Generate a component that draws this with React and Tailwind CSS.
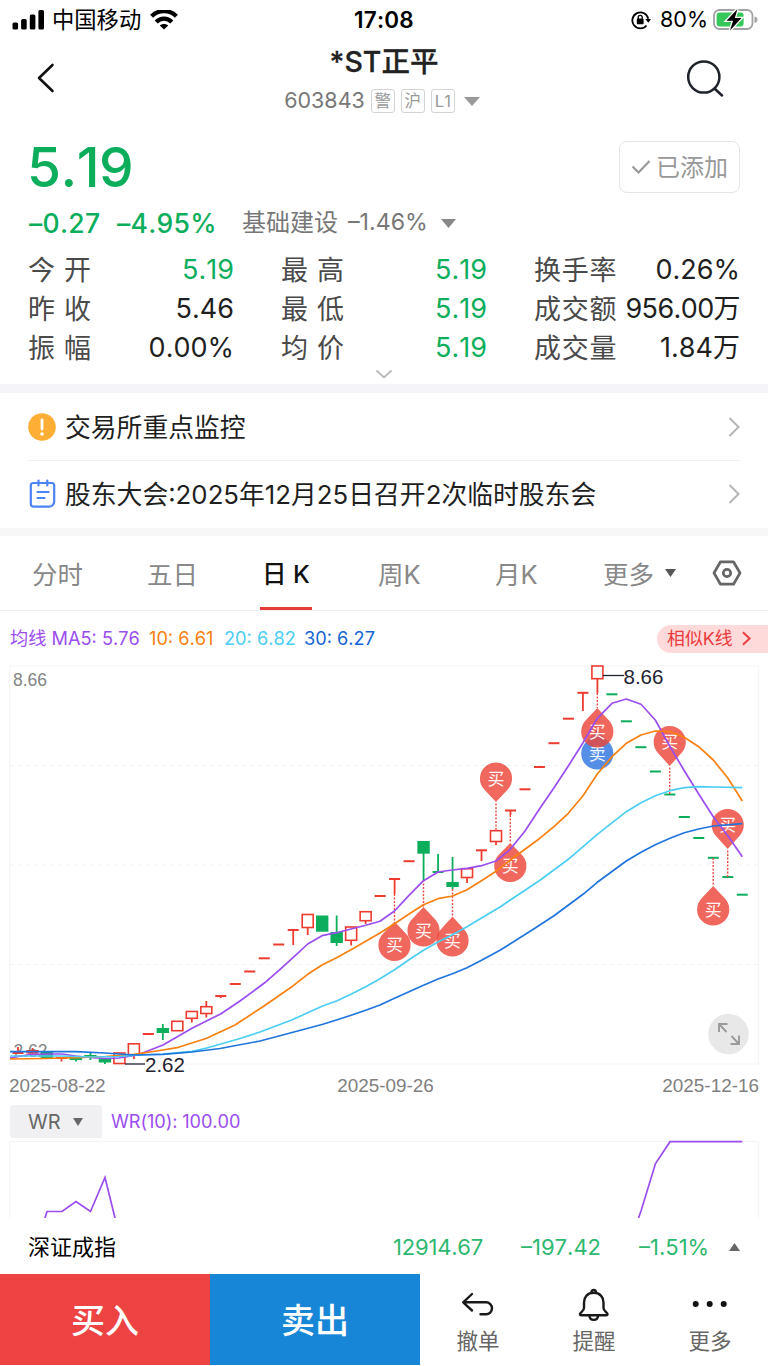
import React from 'react'

const RED = '#ee3b30'
const GREEN = '#0cae5c'

// k: 'dash' | 'up' (hollow) | 'down' (filled) | 'bar' (filled red); y values are pixels on the canvas
const CANDLES = [
  { k: 'dash', c: RED, top: 1053, wick: [1047, 1054] },
  { k: 'bar', c: RED, top: 1050, bottom: 1053.5, wick: [1048, 1055] },
  { k: 'down', c: GREEN, top: 1051, bottom: 1058 },
  { k: 'dash', c: RED, top: 1058, wick: [1058, 1061.5] },
  { k: 'down', c: GREEN, top: 1057, bottom: 1060, wick: [1057, 1061.5] },
  { k: 'down', c: GREEN, top: 1055, bottom: 1058, wick: [1052.5, 1060] },
  { k: 'down', c: GREEN, top: 1059, bottom: 1062.5, wick: [1058, 1064] },
  { k: 'up', c: RED, top: 1053, bottom: 1063.5 },
  { k: 'up', c: RED, top: 1043.8, bottom: 1055, wick: [1055, 1059] },
  { k: 'dash', c: RED, top: 1034 },
  { k: 'down', c: GREEN, top: 1028, bottom: 1033, wick: [1024, 1040] },
  { k: 'up', c: RED, top: 1021.3, bottom: 1030.7 },
  { k: 'up', c: RED, top: 1011.5, bottom: 1018.3, wick: [1018, 1022.5] },
  { k: 'up', c: RED, top: 1006.7, bottom: 1013.5, wick: [1001, 1017.5] },
  { k: 'dash', c: RED, top: 996, wick: [996, 998] },
  { k: 'dash', c: RED, top: 984 },
  { k: 'dash', c: RED, top: 971.5 },
  { k: 'dash', c: RED, top: 958.3 },
  { k: 'dash', c: RED, top: 944.5 },
  { k: 'dash', c: RED, top: 930, wick: [930, 945] },
  { k: 'up', c: RED, top: 914.5, bottom: 927.5, wick: [927, 935] },
  { k: 'down', c: GREEN, top: 915.5, bottom: 931.7 },
  { k: 'down', c: GREEN, top: 932, bottom: 943, wick: [915.5, 946] },
  { k: 'up', c: RED, top: 927, bottom: 940.3, wick: [940, 945.5] },
  { k: 'up', c: RED, top: 911.7, bottom: 920.7, wick: [920, 924] },
  { k: 'dash', c: RED, top: 896 },
  { k: 'dash', c: RED, top: 879, wick: [879, 894] },
  { k: 'dash', c: RED, top: 861.2 },
  { k: 'down', c: GREEN, top: 841, bottom: 853.7, wick: [850, 880] },
  { k: 'dash', c: GREEN, top: 872, wick: [854, 872] },
  { k: 'down', c: GREEN, top: 882, bottom: 887, wick: [857, 889] },
  { k: 'up', c: RED, top: 868.7, bottom: 877.5, wick: [877, 883] },
  { k: 'dash', c: RED, top: 850.3, wick: [850, 861] },
  { k: 'up', c: RED, top: 830.7, bottom: 841.5, wick: [841, 845] },
  { k: 'dash', c: RED, top: 810.5, wick: [810, 815] },
  { k: 'dash', c: RED, top: 789.3 },
  { k: 'dash', c: RED, top: 767 },
  { k: 'dash', c: RED, top: 743.2 },
  { k: 'dash', c: RED, top: 718.7 },
  { k: 'dash', c: RED, top: 692.8, wick: [692, 711] },
  { k: 'up', c: RED, top: 666, bottom: 678.7, wick: [678, 693] },
  { k: 'dash', c: GREEN, top: 694.3 },
  { k: 'dash', c: GREEN, top: 721.3 },
  { k: 'dash', c: GREEN, top: 747.2 },
  { k: 'dash', c: GREEN, top: 771.5 },
  { k: 'dash', c: GREEN, top: 794.5 },
  { k: 'dash', c: GREEN, top: 817 },
  { k: 'dash', c: GREEN, top: 838 },
  { k: 'dash', c: GREEN, top: 857.8 },
  { k: 'dash', c: GREEN, top: 877 },
  { k: 'dash', c: GREEN, top: 894.7 },
]

const MA_LINES = [
  {
    color: '#9b4df0',
    points:
      '10,1058 30,1054.5 47,1054 62,1054 76,1056 90,1057.5 105,1058.5 119,1058 134,1055.5 140,1054 163,1045 192,1028.3 221,1013.7 240,1001 264,983.3 278.7,970.7 293.3,957.3 307.7,944 322,935.7 336.5,932.7 351,929 365.7,925.3 380,921.3 394.5,911 409,895.3 423.5,880.7 438,872 452.5,870 467,868.3 481.5,865.7 496,861 510.3,849.3 525,831 539.3,809.3 554,787.7 568.3,766 583,742.7 597.3,718.3 612,703.3 626.3,699 641,704.3 655.3,720 670,746.7 684.3,770.7 698.7,794 713.3,816.7 728,836 742.3,856.7',
  },
  {
    color: '#f98010',
    points:
      '10,1059 45,1058.5 76,1057.7 105,1056.5 134,1054.3 160,1050.5 177,1047.7 206.7,1038.3 235,1025 264,1006 293.3,985.7 307.7,974.3 322,965 336.5,957.7 351,949.7 365.7,941.3 380,933 394.5,923.7 409,914 423.5,904.7 438,898.7 452.5,896 467,889.7 481.5,880.7 496,871.3 510.3,860 525,849.3 539.3,838.7 554,826.7 568.3,813.3 583,795.7 597.3,774 612,756.7 626.3,743.3 641,735 655.3,731 670,731.7 684.3,737.3 698.7,746.7 713.3,760 728,778.3 742.3,801',
  },
  {
    color: '#4ccdf5',
    points:
      '10,1056 62,1056 90,1057 119,1056.5 140,1055 163,1054 192,1051.3 206.7,1048 220,1044.3 240,1038.5 260,1032 291.7,1020 307.7,1012.7 322,1006.3 336.5,1001 351,994.3 365.7,986.7 380,978.7 394.5,969.7 409,959.7 423.5,950.3 438,942 452.5,934.7 467,926.7 481.5,918 500,907 510.3,900 539.3,880.7 568.3,859.3 597.3,834.3 626.3,811.7 641,802.7 655.3,795.7 670,790.7 684.3,787.7 698.7,786.7 713.3,787 742.3,787.7',
  },
  {
    color: '#1f74dd',
    points:
      '10,1051.7 76,1051.7 105,1053 134,1055 163,1054.3 192,1052 220,1048.5 260,1041 293,1032.3 322,1024.5 336.5,1020 351,1015.3 365.7,1010.3 380,1005 394.5,998.3 423.5,985.3 438,979 452.5,973.7 467,967.7 481.5,960.3 500,950.2 533.3,929.3 554,915.7 583,894.3 597.3,882.3 626.3,861 641,852.3 655.3,844.7 670,838.3 684.3,832.7 698.7,829 713.3,826 742.3,823.7',
  },
]

// tip is where the marker points, from is the candle end of the dotted stem
const PINS = [
  { x: 597.3, y: 753.5, tip: 730, label: '卖', fill: '#2f75e2' },
  { x: 394.5, y: 945, tip: 921.5, from: 894 },
  { x: 423.5, y: 930.5, tip: 907, from: 880 },
  { x: 452.5, y: 940.5, tip: 916.5, from: 889 },
  { x: 510.3, y: 866, tip: 843, from: 815 },
  { x: 597.3, y: 731.5, tip: 708, from: 693 },
  { x: 713.2, y: 909.5, tip: 886, from: 858 },
  { x: 496, y: 778.5, tip: 802, from: 830 },
  { x: 669.7, y: 742, tip: 766, from: 794 },
  { x: 727.7, y: 825, tip: 849, from: 877 },
]

const STATS = [
  ['今 开', '5.19', true, '最 高', '5.19', '换手率', '0.26%'],
  ['昨 收', '5.46', false, '最 低', '5.19', '成交额', '956.00万'],
  ['振 幅', '0.00%', false, '均 价', '5.19', '成交量', '1.84万'],
]

function Caret({ className, up }) {
  return (
    <svg viewBox="0 0 16 10" preserveAspectRatio="none" className={className} fill="currentColor">
      <path d={up ? 'M0 10L8 0L16 10Z' : 'M0 0H16L8 10Z'} />
    </svg>
  )
}

function ChevronRight({ className }) {
  return (
    <svg viewBox="0 0 12 20" className={className} fill="none" stroke="currentColor" strokeWidth="2">
      <path d="M1.5 1L10.5 10L1.5 19" />
    </svg>
  )
}

function StatusBar() {
  return (
    <div className="flex h-10 items-center pl-3 pr-[10px] text-black">
      <div className="flex w-[342px] items-center">
        <svg viewBox="0 0 32 20" className="h-5 w-8" fill="currentColor">
          <rect x="0.5" y="12.5" width="5.6" height="7" rx="1.5" />
          <rect x="9.1" y="9" width="5.6" height="10.5" rx="1.5" />
          <rect x="17.8" y="4.5" width="5.6" height="15" rx="1.5" />
          <rect x="26.4" y="0" width="5.6" height="19.5" rx="1.5" />
        </svg>
        <span className="ml-[8px] text-[22.3px] leading-none">中国移动</span>
        <svg viewBox="0 0 28 20" className="ml-[9px] h-5 w-7" fill="none" stroke="currentColor" strokeWidth="4.2">
          <path d="M1.6 6.2C8.5 -0.6 19.5 -0.6 26.4 6.2" />
          <path d="M6.2 12C10.7 7.6 17.3 7.6 21.8 12" />
          <path d="M14 19.5L9.8 15.5C12.2 13.5 15.8 13.5 18.2 15.5Z" fill="currentColor" stroke="none" />
        </svg>
      </div>
      <span className="text-[22.5px] font-semibold leading-none tracking-[0.2px]">17:08</span>
      <div className="ml-auto flex items-center">
        <svg viewBox="0 0 20 20" className="h-5 w-5" fill="none" stroke="currentColor" strokeWidth="1.8">
          <path d="M15.5 15.5A8 8 0 1 1 17.2 8.8" />
          <path d="M14.3 9H20L17.3 12.8Z" fill="currentColor" stroke="none" />
          <rect x="5.8" y="8.6" width="6.8" height="5.6" rx="0.8" fill="currentColor" stroke="none" />
          <path d="M7.2 9V7.3A2 2 0 0 1 11.2 7.3V9" strokeWidth="1.3" />
        </svg>
        <span className="ml-[9px] text-[21.5px] leading-none">80%</span>
        <svg viewBox="0 0 45 24" className="ml-[5px] h-6 w-[45px]">
          <rect x="1" y="2" width="38.5" height="19" rx="5.5" fill="none" stroke="#a2a2a2" strokeWidth="1.8" />
          <rect x="3.6" y="4.6" width="27" height="13.8" rx="3" fill="#35c759" />
          <path d="M41.5 8.5C45.5 9.5 45.5 14 41.5 15Z" fill="#a2a2a2" />
          <path d="M24.5 1L13.5 12.8H20L17 22.5L28.5 10H21.8Z" fill="#000" stroke="#fff" strokeWidth="2.6" paintOrder="stroke" />
        </svg>
      </div>
    </div>
  )
}

function Header() {
  const tags = ['警', '沪', 'L1']
  return (
    <div className="flex h-[85px] items-start pl-9 pr-11">
      <svg viewBox="0 0 20 32" className="mt-[22px] h-8 w-5" fill="none" stroke="#111" strokeWidth="2.6" strokeLinecap="round" strokeLinejoin="round">
        <path d="M16.5 3L3 16L16.5 29" />
      </svg>
      <div className="ml-[226px] flex w-[204px] flex-col items-center">
        <h1 className="mt-[8px] whitespace-nowrap text-[28.5px] font-medium leading-7 text-[#222] [-webkit-text-stroke:0.3px_#222]">*ST正平</h1>
        <div className="mt-[13px] flex h-6 items-center pr-[4px] text-[#777]">
          <span className="text-[21.5px] leading-none">603843</span>
          {tags.map((t) => (
            <span key={t} className="ml-[6px] flex h-6 w-6 items-center justify-center rounded-[3px] border-[1.5px] border-[#d4d4d4] text-[16.5px] leading-none text-[#999]">
              {t}
            </span>
          ))}
          <Caret className="ml-[9px] h-[9px] w-4 text-[#999]" />
        </div>
      </div>
      <svg viewBox="0 0 38 38" className="ml-auto mt-[19px] h-[38px] w-[38px]" fill="none" stroke="#1e222b" strokeWidth="2.5">
        <circle cx="17.8" cy="18" r="15.6" />
        <path d="M28.5 29.5L36 36.5" strokeLinecap="round" />
      </svg>
    </div>
  )
}

function Quote() {
  return (
    <div className="h-[259px] px-7">
      <div className="flex h-[76px] items-center justify-between">
        <span className="-ml-[1px] mt-[9px] text-[55px] font-medium leading-none tracking-[-0.5px] text-[#0cae5c]">5.19</span>
        <div className="mt-2 flex h-[52px] w-[121px] items-center justify-center rounded-lg border-[1.5px] border-[#e5e5e5] text-[#999]">
          <svg viewBox="0 0 20 16" className="h-4 w-5" fill="none" stroke="currentColor" strokeWidth="2.2">
            <path d="M1.5 7.5L7.5 13.5L18.5 2" />
          </svg>
          <span className="ml-[5px] pt-[2px] text-[24px] leading-none">已添加</span>
        </div>
      </div>
      <div className="mt-[5px] flex h-[34px] items-center pl-px leading-none">
        <span className="w-[88px] text-[26.5px] font-medium tracking-[0.3px] text-[#0cae5c]">–0.27</span>
        <span className="w-[125px] text-[26.5px] font-medium tracking-[0.3px] text-[#0cae5c]">–4.95%</span>
        <span className="w-[106px] text-[24px] text-[#777]">基础建设</span>
        <span className="text-[23.2px] text-[#777]">–1.46%</span>
        <Caret className="ml-[13px] h-[9px] w-[15px] text-[#888]" />
      </div>
      <div className="mt-[10px] flex flex-col text-[27px] leading-none text-[#1f1f1f]">
        {STATS.map(([a, av, green, b, bv, c, cv]) => (
          <div key={a} className="flex h-[39px] items-center whitespace-nowrap">
            <div className="flex w-[206px] items-center justify-between">
              <Label text={a} />
              <span className={green ? 'text-[#0cae5c]' : ''}>{av}</span>
            </div>
            <div className="ml-[47px] flex w-[206px] items-center justify-between">
              <Label text={b} />
              <span className="text-[#0cae5c]">{bv}</span>
            </div>
            <div className="ml-[47px] flex w-[206px] items-center justify-between">
              <Label text={c} />
              <span className={cv.length > 6 ? 'tracking-[-0.6px]' : ''}>{cv}</span>
            </div>
          </div>
        ))}
      </div>
      <svg viewBox="0 0 18 10" className="mx-auto mt-[2px] h-[10px] w-[18px]" fill="none" stroke="#bbb" strokeWidth="2">
        <path d="M1.5 1.5L9 8.5L16.5 1.5" />
      </svg>
    </div>
  )
}

function Label({ text }) {
  return <span className="pt-[2px] tracking-[0.7px] text-[#4a4a4a]">{text}</span>
}

function Notices() {
  return (
    <div className="h-[135px] px-7 text-[#1f1f1f]">
      <div className="flex h-[68px] items-center border-b border-[#f0f0f0]">
        <svg viewBox="0 0 28 28" className="h-7 w-7">
          <circle cx="14" cy="14" r="13.8" fill="#ffae35" />
          <path d="M14 7V16" stroke="#fff" strokeWidth="2.8" strokeLinecap="round" />
          <circle cx="14" cy="21" r="1.8" fill="#fff" />
        </svg>
        <span className="ml-[9px] pt-[3px] text-[25.8px] leading-none">交易所重点监控</span>
        <ChevronRight className="ml-auto h-5 w-3 text-[#b5b5b5]" />
      </div>
      <div className="flex h-[66px] items-center">
        <svg viewBox="0 0 28 30" className="h-[30px] w-7" fill="none" stroke="#4c84f5" strokeWidth="2.2" strokeLinecap="round" strokeLinejoin="round">
          <path d="M5.3 4H23.7A2.5 2.5 0 0 1 26.2 6.5V22.5C26.2 25.5 23.5 27.7 21 27.7H5.8A3 3 0 0 1 2.8 24.7V6.5A2.5 2.5 0 0 1 5.3 4Z" />
          <path d="M10.5 1.5V6.5M19.3 1.5V6.5M9.500 13H20.5M9.5 19H16.5" />
        </svg>
        <span className="ml-[9px] whitespace-nowrap pt-[2px] text-[25.8px] leading-none">股东大会:2025年12月25日召开2次临时股东会</span>
        <ChevronRight className="ml-auto h-5 w-3 text-[#b5b5b5]" />
      </div>
    </div>
  )
}

function Tabs() {
  return (
    <div className="flex h-[75px] items-center border-b border-[#efefef] pl-8 text-[25.5px] leading-none text-[#888]">
      <span className="w-[115px] pt-[3px]">分时</span>
      <span className="w-[113px] pt-[3px]">五日</span>
      <div className="flex h-full w-[52px] flex-col items-center justify-between">
        <span className="mt-[26px] whitespace-nowrap text-[24.5px] font-medium text-[#111]">日 K</span>
        <span className="h-[3px] w-full bg-[#e93a3a]" />
      </div>
      <span className="ml-[66px] w-[117px] pt-[3px]">周K</span>
      <span className="w-[108px] pt-[3px]">月K</span>
      <span className="pt-[3px]">更多</span>
      <Caret className="ml-[11px] h-2 w-[11px] text-[#555]" />
      <svg viewBox="0 0 30 26" className="ml-[36px] h-[26px] w-[30px]" fill="none" stroke="#666" strokeWidth="2.7" strokeLinejoin="round">
        <path d="M8.5 1.8H21.5L28 13L21.5 24.2H8.5L2 13Z" />
        <circle cx="15" cy="13" r="3.7" />
      </svg>
    </div>
  )
}

function Legend() {
  return (
    <div className="flex h-[49px] items-center pl-[10px] pt-[6px] text-[18.2px] leading-none">
      <span className="w-[139px] whitespace-nowrap text-[#9b4df0]">均线 MA5: 5.76</span>
      <span className="w-[75px] whitespace-nowrap text-[#f98010]">10: 6.61</span>
      <span className="w-[80px] whitespace-nowrap text-[#4ccdf5]">20: 6.82</span>
      <span className="whitespace-nowrap text-[#1565d8]">30: 6.27</span>
      <div className="ml-auto flex h-7 w-[111px] items-center rounded-l-full bg-[#ffdada] pl-[10px] text-[#ea3c3c]">
        <span className="text-[17.9px]">相似K线</span>
        <svg viewBox="0 0 10 16" className="ml-[9px] h-[15px] w-[9px]" fill="none" stroke="currentColor" strokeWidth="2.2">
          <path d="M1 1L8.5 8L1 15" />
        </svg>
      </div>
    </div>
  )
}

function Candle({ x, candle }) {
  const { k, c, top, bottom, wick } = candle
  return (
    <g>
      {wick && <line x1={x} x2={x} y1={wick[0]} y2={wick[1]} stroke={c} strokeWidth="1.8" />}
      {k === 'dash' && <line x1={x - 5.5} x2={x + 5.5} y1={top} y2={top} stroke={c} strokeWidth="2" />}
      {k === 'up' && <rect x={x - 5.5} y={top} width="11" height={bottom - top} fill="#fff" stroke={c} strokeWidth="1.6" />}
      {(k === 'down' || k === 'bar') && <rect x={x - 6.2} y={top} width="12.4" height={bottom - top} fill={c} />}
    </g>
  )
}

function Pin({ pin }) {
  const { x, y, tip, from, label = '买', fill = '#eb4539' } = pin
  const dir = tip < y ? -1 : 1
  const ty = y + dir * 11.5
  const sweep = dir < 0 ? 1 : 0
  return (
    <g>
      {from && <line x1={x} x2={x} y1={from} y2={tip} stroke="#ee4b45" strokeWidth="1.4" strokeDasharray="2 1.5" />}
      <path d={`M${x} ${tip}L${x + 11.3} ${ty}A16.1 16.1 0 1 ${sweep} ${x - 11.3} ${ty}Z`} fill={fill} fillOpacity="0.82" />
      <text x={x} y={y + 6} textAnchor="middle" fontSize="17" fill="#fff" fillOpacity="0.95">
        {label}
      </text>
    </g>
  )
}

function KLineChart() {
  return (
    <svg viewBox="0 660 768 410" className="block h-[410px] w-full overflow-visible">
      <rect x="9.7" y="666" width="749" height="398" fill="none" stroke="#f4f4f4" />
      {[765.5, 865, 964.5].map((y) => (
        <line key={y} x1="10" x2="758" y1={y} y2={y} stroke="#f2f2f2" strokeDasharray="4 4" />
      ))}
      <g fontFamily="Liberation Sans, sans-serif" fontSize="17.5" fill="#858585">
        <text x="13" y="685.5">8.66</text>
        <text x="13.5" y="1057">2.62</text>
      </g>
      {CANDLES.map((candle, i) => (
        <Candle key={i} x={18 + i * 14.485} candle={candle} />
      ))}
      {PINS.map((pin) => (
        <Pin key={`${pin.x}-${pin.y}`} pin={pin} />
      ))}
      {MA_LINES.map((line) => (
        <polyline key={line.color} points={line.points} fill="none" stroke={line.color} strokeWidth="1.7" strokeLinejoin="round" />
      ))}
      <g stroke="#1f2333" strokeWidth="1.3">
        <line x1="603" x2="624" y1="675.5" y2="675.5" />
        <line x1="125" x2="145" y1="1064" y2="1064" />
      </g>
      <g fontFamily="Liberation Sans, sans-serif" fontSize="20.5" fill="#1f2333">
        <text x="623.5" y="683.5">8.66</text>
        <text x="145" y="1071.5">2.62</text>
      </g>
      <circle cx="728.5" cy="1034" r="20.3" fill="#e6e6e6" fillOpacity="0.9" />
      <g fill="none" stroke="#9a9a9a" strokeWidth="1.9">
        <path d="M719 1032V1024H727.5M719.5 1024.5L726.5 1032" />
        <path d="M739 1035.5V1044H730.5M738.5 1043.5L731.5 1036" />
      </g>
    </svg>
  )
}

function WrPanel() {
  return (
    <>
      <div className="flex h-[39px] items-center px-[10px] pt-[4px] leading-none">
        <div className="flex h-[33px] w-[92px] items-center rounded-[3px] bg-[#f0f0f2] pl-[18px] text-[20px] text-[#666]">
          WR
          <Caret className="ml-[12px] h-2 w-[10px]" />
        </div>
        <span className="ml-[9px] text-[18.2px] tracking-[-0.1px] text-[#9b4df0]">WR(10): 100.00</span>
      </div>
      <svg viewBox="0 1139 768 79" className="block h-[79px] w-full">
        <path d="M9.7 1218V1141.5H758.7V1218" fill="none" stroke="#f4f4f4" />
        <g fill="none" stroke="#9b4df0" strokeWidth="1.7">
          <polyline points="45,1218 47,1211.5 62,1211.5 76,1201.5 90.5,1211.5 105,1177.5 115,1218" />
          <polyline points="638.5,1218 641,1211 655.5,1163.5 670,1141.7 742.3,1141.7" />
        </g>
      </svg>
    </>
  )
}

function IndexBar() {
  return (
    <div className="flex h-14 items-center pl-7 pr-[28px] pt-px text-[22px] leading-none text-[#2db870]">
      <span className="w-[365px] text-black">深证成指</span>
      <span className="w-[128px] tracking-[-0.2px]">12914.67</span>
      <span className="w-[118px]">–197.42</span>
      <span>–1.51%</span>
      <Caret up className="ml-auto h-2 w-[11px] text-[#666]" />
    </div>
  )
}

function BottomBar() {
  return (
    <div className="flex h-[91px] leading-none">
      <button className="w-[210px] bg-[#ee4343] pt-[2px] text-[34px] font-medium text-white">买入</button>
      <button className="w-[210px] bg-[#1886d7] pt-[2px] text-[34px] font-medium text-white">卖出</button>
      <div className="flex flex-1 text-[21.5px] text-[#666]">
        <Action label="撤单">
          <path d="M12 6L3.2 14.3L12 22.5M3.2 14.3H26A6 6 0 0 1 26 26.3H20.5" strokeLinecap="round" />
        </Action>
        <Action label="提醒">
          <path d="M17.7 4.8C11.5 4.8 8 9 8 14.5V20C8 23 4 24.5 4 26C4 27 4.5 27.3 5.5 27.3H30C31 27.3 31.5 27 31.5 26C31.5 24.5 27.5 23 27.5 20V14.5C27.5 9 24 4.8 17.7 4.8Z" />
          <path d="M15.5 4.5C15 1 20.5 1 20 4.5M13.5 28C13.8 33.2 21.7 33.2 22 28" />
        </Action>
        <Action label="更多">
          <g fill="#111" stroke="none">
            <circle cx="3.7" cy="16" r="3" />
            <circle cx="17.7" cy="16" r="3" />
            <circle cx="31.7" cy="16" r="3" />
          </g>
        </Action>
      </div>
    </div>
  )
}

function Action({ label, children }) {
  return (
    <div className="flex w-[116px] flex-col items-center pt-[14px]">
      <svg viewBox="0 0 36 34" className="h-[34px] w-9" fill="none" stroke="#1a1a1a" strokeWidth="2.4" strokeLinejoin="round">
        {children}
      </svg>
      <span className="mt-[9px]">{label}</span>
    </div>
  )
}

export default function App() {
  return (
    <div className="h-[1366px] w-[768px] overflow-hidden bg-white font-['Inter','Noto_Sans_CJK_SC',sans-serif] [font-kerning:none]">
      <StatusBar />
      <Header />
      <Quote />
      <div className="h-[9px] bg-[#f5f5f9]" />
      <Notices />
      <div className="h-2 bg-[#f7f7f8]" />
      <Tabs />
      <Legend />
      <KLineChart />
      <div className="flex h-[30px] items-center justify-between px-[9px] pt-[2px] font-['Liberation_Sans',sans-serif] text-[18.9px] leading-none text-[#808080]">
        <span>2025-08-22</span>
        <span className="pl-[3px]">2025-09-26</span>
        <span>2025-12-16</span>
      </div>
      <WrPanel />
      <IndexBar />
      <BottomBar />
    </div>
  )
}
